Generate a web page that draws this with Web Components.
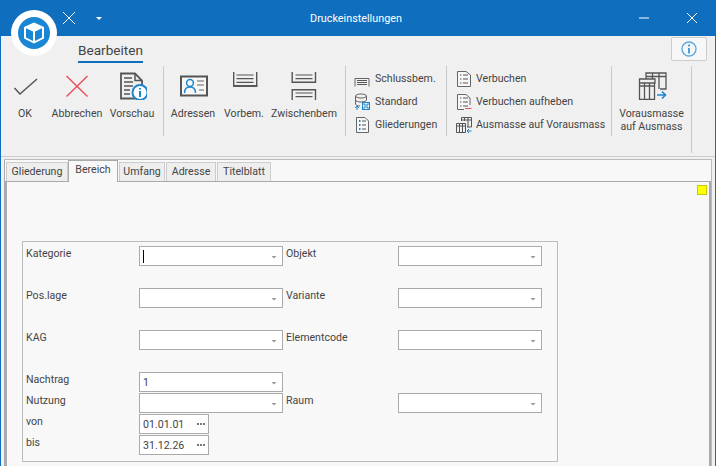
<!DOCTYPE html>
<html lang="de">
<head>
<meta charset="utf-8">
<title>Druckeinstellungen</title>
<style>
  html, body { margin: 0; padding: 0; height: 100%; overflow: hidden; }
  body { font: 10.6px Roboto, "Liberation Sans", sans-serif; color: #444; }
  svg { display: block; }
</style>
</head>
<body>

<app-window>
  <title-bar slot="top" caption="Druckeinstellungen"></title-bar>
  <ribbon-bar slot="top" tab="Bearbeiten">
    <ribbon-group style="--w:163px">
      <big-button label="OK" style="--bw:48px">
        <svg width="30" height="28" viewBox="10 72 30 28" fill="none"><path d="M14.5 88L20 94L37 79" stroke="#555" stroke-width="1.5"/></svg>
      </big-button>
      <big-button label="Abbrechen" style="--bw:56px">
        <svg width="30" height="28" viewBox="62 72 30 28" fill="none"><path d="M66.5 76L87.5 96.5M87.5 76L66.5 96.5" stroke="#e8535c" stroke-width="1.5"/></svg>
      </big-button>
      <big-button label="Vorschau" style="--bw:54px">
        <svg width="30" height="28" viewBox="117 72 30 28" fill="none">
          <path d="M135 98.5H121V73.5H135L142 80.5V85" stroke="#555" stroke-width="1.8"/>
          <path d="M135 73.5V80.5H142" stroke="#555" stroke-width="1.5"/>
          <path d="M124 78H132M124 82H133M124 86H133M124 90H130M124 94H130" stroke="#555" stroke-width="1.5"/>
          <circle cx="140" cy="92.5" r="7.5" fill="#fff" stroke="#1c87d0" stroke-width="2"/>
          <path d="M140 91V97M140 88V89.6" stroke="#1c87d0" stroke-width="2"/>
        </svg>
      </big-button>
    </ribbon-group>
    <ribbon-group style="--w:182px;--pl:4px">
      <big-button label="Adressen" style="--bw:50px">
        <svg width="32" height="28" viewBox="177 72 32 28" fill="none">
          <rect x="181" y="76.5" width="26" height="19" stroke="#555" stroke-width="2" fill="#f7f7f7"/>
          <circle cx="190" cy="83" r="3.4" stroke="#1c87d0" stroke-width="1.5"/>
          <path d="M184.5 93C184.5 88.5 186.5 87 190 87C193.5 87 195.5 88.5 195.5 93" stroke="#1c87d0" stroke-width="1.5"/>
          <path d="M197 81H204M197 85H204M199 90H204" stroke="#666" stroke-width="1.2"/>
        </svg>
      </big-button>
      <big-button label="Vorbem." style="--bw:52px">
        <svg width="30" height="28" viewBox="229 72 30 28" fill="none">
          <path d="M233.7 72V86H256.7V72" stroke="#555" stroke-width="1.4"/>
          <path d="M233 86H257.3" stroke="#555" stroke-width="1.8"/>
          <path d="M236.5 75H253.5M236.5 78.7H253.5M236.5 82.4H253.5" stroke="#555" stroke-width="1.2"/>
        </svg>
      </big-button>
      <big-button label="Zwischenbem" style="--bw:68px">
        <svg width="30" height="28" viewBox="290 72 30 28" fill="none">
          <path d="M293.2 72V82.3H316.5V72" stroke="#555" stroke-width="1.4"/>
          <path d="M293.2 100V89.7H316.5V100" stroke="#555" stroke-width="1.4"/>
          <path d="M296.5 75H313.5M296.5 78.7H313.5M296.5 93H313.5M296.5 96.7H313.5" stroke="#555" stroke-width="1.2"/>
        </svg>
      </big-button>
    </ribbon-group>
    <ribbon-group style="--w:101px;--pl:8px;--col:column;--pt:1px">
      <small-button label="Schlussbem.">
        <svg width="16" height="16" viewBox="0 0 16 16" fill="none"><path d="M1 15.5V7.5H15V15.5" stroke="#666"/><path d="M3 9.5H13M3 11.5H13M3 13.5H13" stroke="#555"/></svg>
      </small-button>
      <small-button label="Standard">
        <svg width="16" height="18" viewBox="0 0 16 18" fill="none">
          <ellipse cx="7" cy="3" rx="5.5" ry="2" stroke="#666"/>
          <path d="M1.5 3V11C1.5 12 3.5 13 6 13M12.5 3V7M1.5 7C1.5 8 4 9 7 9S12.5 8 12.5 7" stroke="#666"/>
          <rect x="8.5" y="9.5" width="7" height="7" fill="#f4f4f4" stroke="#1c87d0"/>
          <path d="M10 10V12H14V10M10 16V14H14V16" stroke="#1c87d0"/>
          <path d="M3 17V13.5M1 15L3 13L5 15" stroke="#1c87d0"/>
        </svg>
      </small-button>
      <small-button label="Gliederungen">
        <svg width="16" height="18" viewBox="0 0 16 18" fill="none">
          <path d="M2.5 1.5H11L14.5 5V16.5H2.5Z" fill="#f7f7f7" stroke="#666"/>
          <path d="M5 5H6.5M5 9H6.5M5 13H6.5" stroke="#1c87d0" stroke-width="2"/>
          <path d="M8 5H12M8 9H12M8 13H12" stroke="#555"/>
        </svg>
      </small-button>
    </ribbon-group>
    <ribbon-group style="--w:165px;--pl:9px;--col:column;--pt:1px">
      <small-button label="Verbuchen" style="--gap:4px">
        <svg width="16" height="18" viewBox="0 0 16 18" fill="none">
          <path d="M1.5 1.5H10L14.5 5V16.5H1.5Z" fill="#f7f7f7" stroke="#666"/>
          <path d="M4 5H5.5M4 9H5.5M4 13H5.5M7 5H12M7 9H12M7 13H12" stroke="#555"/>
        </svg>
      </small-button>
      <small-button label="Verbuchen aufheben" style="--gap:4px">
        <svg width="16" height="18" viewBox="0 0 16 18" fill="none">
          <path d="M14 12V5L10 1.5H1.5V16.5H8" fill="#f7f7f7" stroke="#666"/>
          <path d="M4 5H5.5M4 9H5.5M4 13H5.5M7 5H12M7 9H12M7 13H12" stroke="#555"/>
          <path d="M9 15.5H15.5" stroke="#e0525c"/>
        </svg>
      </small-button>
      <small-button label="Ausmasse auf Vorausmass" style="--gap:4px">
        <svg width="16" height="18" viewBox="0 0 16 18" fill="none">
          <path d="M5.5 5V1.5H15.5V11H11M8.5 1.5V5M12 1.5V11M5.5 4H15.5" stroke="#555"/>
          <path d="M0.5 7.5H9.5V16.5H0.5ZM3.5 7.5V16.5M6.5 7.5V16.5M0.5 10H9.5" stroke="#555"/>
          <path d="M15.5 15H11M13 13L11 15L13 17" stroke="#1c87d0"/>
        </svg>
      </small-button>
    </ribbon-group>
    <ribbon-group style="--w:80px;--h:87px">
      <big-button label="" style="--bw:79px">
        <svg width="32" height="28" viewBox="635 72 32 28" fill="none">
          <path d="M645 79V73H665V89H659M651.5 73V79M658 73V89M645 76.5H665" stroke="#555" stroke-width="1.3"/>
          <path d="M638.5 83V99.5H653.5V83ZM643.5 83V99.5M648.5 83V99.5M638.5 79H654V83H638.5ZM638.5 86H653.5" stroke="#555" stroke-width="1.3"/>
          <path d="M656 95H664M661 91.5L664.5 95L661 98.5" stroke="#1c87d0" stroke-width="1.6"/>
        </svg>
        <span slot="text">Vorausmasse<br>auf Ausmass</span>
      </big-button>
    </ribbon-group>
  </ribbon-bar>

  <tab-strip>
    <tab-item style="--tw:62px">Gliederung</tab-item>
    <tab-item active style="--tw:50px">Bereich</tab-item>
    <tab-item style="--tw:46px">Umfang</tab-item>
    <tab-item style="--tw:50px">Adresse</tab-item>
    <tab-item style="--tw:54px">Titelblatt</tab-item>
    <form-panel slot="page">
      <form-label>Kategorie</form-label><combo-box caret></combo-box>
      <form-label indent>Objekt</form-label><combo-box></combo-box>

      <form-label>Pos.lage</form-label><combo-box></combo-box>
      <form-label indent>Variante</form-label><combo-box></combo-box>

      <form-label>KAG</form-label><combo-box></combo-box>
      <form-label indent>Elementcode</form-label><combo-box></combo-box>

      <form-label>Nachtrag</form-label><combo-box value="1"></combo-box>
      <span></span><span></span>

      <form-label>Nutzung</form-label><combo-box></combo-box>
      <form-label indent>Raum</form-label><combo-box></combo-box>

      <form-label>von</form-label><date-box value="01.01.01"></date-box>
      <span></span><span></span>

      <form-label>bis</form-label><date-box value="31.12.26"></date-box>
      <span></span><span></span>
    </form-panel>
  </tab-strip>
</app-window>

<script>
function define(name, html, init) {
  const template = document.createElement('template');
  template.innerHTML = html;
  customElements.define(name, class extends HTMLElement {
    constructor() {
      super();
      this.attachShadow({ mode: 'open' });
      this.shadowRoot.appendChild(template.content.cloneNode(true));
    }
    connectedCallback() {
      if (init) init(this, this.shadowRoot);
    }
  });
}

define('app-window', `
  <style>
    :host { display: flex; flex-direction: column; box-sizing: border-box; height: 466px; width: 716px;
      border-left: 1px solid #106ebe; border-right: 1px solid #106ebe; background: #f0f0f0; overflow: hidden; }
  </style>
  <slot name="top"></slot>
  <slot></slot>
`);

define('title-bar', `
  <style>
    :host { display: flex; align-items: center; height: 36px; margin: 0 -1px; background: #106ebe; color: #fff; position: relative; z-index: 2; }
    .logo { position: absolute; left: 11px; top: 10px; }
    .left { width: 159px; padding-left: 63px; display: flex; align-items: center; gap: 21px; box-sizing: border-box; flex: none; }
    .caption { flex: 1; text-align: center; font-size: 10.8px; padding-right: 4px; }
    .right { display: flex; align-items: center; gap: 38px; padding-right: 19px; width: 159px; box-sizing: border-box; justify-content: flex-end; flex: none; }
  </style>
  <svg class="logo" width="46" height="46" viewBox="0 0 46 46" fill="none">
    <circle cx="23" cy="23" r="23" fill="#fff"/>
    <circle cx="23" cy="23" r="16" fill="#1a87d5"/>
    <path d="M23 12.5L33 17V28.5L23 33.5L13 28.5V17Z" fill="#fff"/>
    <path d="M15 18.2L22 21.5V31L15 27.4ZM31 18.2L24 21.5V31L31 27.4Z" fill="#1a87d5"/>
  </svg>
  <div class="left">
    <svg width="12" height="12" viewBox="0 0 12 12" fill="none"><path d="M0 0L12 12M12 0L0 12" stroke="#fff"/></svg>
    <svg width="6" height="3" viewBox="0 0 6 3"><path d="M0 0H6L3 3Z" fill="#fff"/></svg>
  </div>
  <div class="caption"></div>
  <div class="right">
    <svg width="10" height="2" viewBox="0 0 10 2"><path d="M0 1H10" stroke="#fff"/></svg>
    <svg width="10" height="10" viewBox="0 0 10 10" fill="none"><path d="M0 0L10 10M10 0L0 10" stroke="#fff"/></svg>
  </div>
`, (el, root) => {
  root.querySelector('.caption').textContent = el.getAttribute('caption');
});

define('ribbon-bar', `
  <style>
    :host { display: block; height: 121px; box-sizing: border-box; border-bottom: 1px solid #ccc; background: #f0f0f0; }
    .head { height: 30px; display: flex; align-items: flex-start; justify-content: space-between; box-sizing: border-box; padding-left: 77px; padding-right: 8px; }
    .tab { font-size: 13.6px; line-height: 20px; color: #444; border-bottom: 2px solid #106ebe; margin-top: 4px; height: 21px; }
    .info { width: 36px; height: 24px; margin-top: 1px; box-sizing: border-box; background: #f7f7f7; border: 1px solid #ccc; border-radius: 2px; display: flex; align-items: center; justify-content: center; }
    .groups { display: flex; }
  </style>
  <div class="head">
    <div class="tab"></div>
    <div class="info">
      <svg width="16" height="16" viewBox="0 0 16 16" fill="none"><circle cx="8" cy="8" r="7" stroke="#5aaae3" stroke-width="1.4"/><path d="M8 7V12.5M8 3.6V5.4" stroke="#3d96d8" stroke-width="1.8"/></svg>
    </div>
  </div>
  <div class="groups"><slot></slot></div>
`, (el, root) => {
  root.querySelector('.tab').textContent = el.getAttribute('tab');
});

define('ribbon-group', `
  <style>
    :host { display: flex; flex-direction: var(--col, row); box-sizing: border-box; width: var(--w); height: var(--h, 70px);
      padding-left: var(--pl, 0); padding-top: var(--pt, 0); border-right: 1px solid #c9c9c9; flex: none; }
  </style>
  <slot></slot>
`);

define('big-button', `
  <style>
    :host { display: flex; flex-direction: column; align-items: center; width: var(--bw); padding-top: 6px; flex: none; color: #444; text-align: center; }
    .icon { height: 28px; margin-bottom: 7px; }
    .text { line-height: 13px; white-space: nowrap; }
  </style>
  <div class="icon"><slot></slot></div>
  <div class="text"><slot name="text"></slot><span class="lbl"></span></div>
`, (el, root) => {
  root.querySelector('.lbl').textContent = el.getAttribute('label');
});

define('small-button', `
  <style>
    :host { display: flex; align-items: center; height: 24px; gap: var(--gap, 5px); white-space: nowrap; color: #444; }
    .icon { width: 16px; display: flex; justify-content: center; flex: none; }
  </style>
  <div class="icon"><slot></slot></div>
  <span class="lbl"></span>
`, (el, root) => {
  root.querySelector('.lbl').textContent = el.getAttribute('label');
});

define('tab-strip', `
  <style>
    :host { display: flex; flex-direction: column; flex: 1; margin: 2px 3px 0 3px; border: solid #bbb; border-width: 1px 1px 0 1px; border-left-color: #aaa; background: #f8f8f8; min-height: 0; }
    .tabs { display: flex; align-items: flex-end; height: 21px; padding-left: 1px; }
    .page { flex: 1; border: solid #aaa; border-width: 1px 2px 0 2px; }
  </style>
  <div class="tabs"><slot></slot></div>
  <div class="page"><slot name="page"></slot></div>
`);

define('tab-item', `
  <style>
    :host { display: block; box-sizing: border-box; width: var(--tw); height: 19px; text-align: center; line-height: 18px; background: #eee; border: 1px solid #ccc; border-bottom: 0; color: #444; white-space: nowrap; margin-right: 1px; }
    :host([active]) { height: 22px; background: #f8f8f8; border: 1px solid #aaa; border-bottom: 0; margin-bottom: -1px; margin-left: -1px; margin-right: 1px; line-height: 18px; position: relative; z-index: 1; }
  </style>
  <slot></slot>
`);

define('form-panel', `
  <style>
    :host { display: block; padding-top: 3px; }
    .flag { width: 10px; height: 10px; box-sizing: border-box; border: 1px solid #c8c800; background: #ff0; margin: 0 2px 46px auto; }
    .box { display: grid; box-sizing: border-box; width: 536px; height: 221px; margin-left: 15px; padding: 4px 0 0 3px; border: 1px solid #bbb;
      grid-template-columns: 113px 144px 115px 144px; grid-template-rows: repeat(3, 42px) repeat(4, 21px); }
  </style>
  <div class="flag"></div>
  <div class="box"><slot></slot></div>
`);

define('form-label', `
  <style>
    :host { display: block; line-height: 15px; color: #444; }
    :host([indent]) { padding-left: 3px; }
  </style>
  <slot></slot>
`);

define('combo-box', `
  <style>
    :host { display: flex; align-items: center; box-sizing: border-box; height: 20px; width: 144px; border: 1px solid #aaa; background: #fff; padding: 0 5px 0 3px; color: #444; position: relative; }
    .v { flex: 1; }
    .caret { width: 1px; height: 13px; background: #000; }
    .arrow { width: 6px; height: 3px; background: #999; clip-path: polygon(0 0, 100% 0, 50% 100%); margin-top: 2px; }
    [hidden] { display: none; }
  </style>
  <span class="caret" hidden></span>
  <span class="v"></span>
  <span class="arrow"></span>
`, (el, root) => {
  root.querySelector('.v').textContent = el.getAttribute('value') || '';
  root.querySelector('.caret').hidden = !el.hasAttribute('caret');
});

define('date-box', `
  <style>
    :host { display: flex; align-items: center; justify-content: space-between; box-sizing: border-box; height: 20px; width: 70px; border: 1px solid #aaa; background: #fff; padding: 0 3px 0 3px; color: #444; }
    .dots { display: flex; gap: 1px; }
    .dots i { display: block; width: 2px; height: 2px; background: #777; }
  </style>
  <span class="v"></span>
  <span class="dots"><i></i><i></i><i></i></span>
`, (el, root) => {
  root.querySelector('.v').textContent = el.getAttribute('value') || '';
});
</script>
</body>
</html>
